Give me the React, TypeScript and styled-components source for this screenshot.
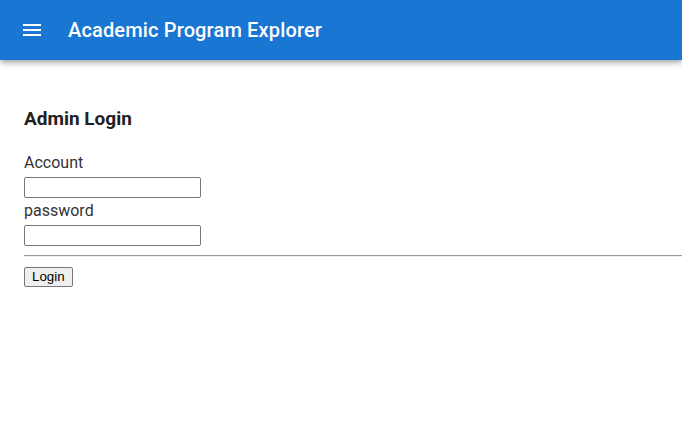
import React from "react";
import styled, { createGlobalStyle } from "styled-components";

const Global = createGlobalStyle`
  html, body { margin: 0; padding: 0; background: #fff; }
  body { font-family: Roboto, "Liberation Sans", sans-serif; color: rgba(0,0,0,0.87); }
`;

const AppBar = styled.header`
  height: 60px;
  background: #1976d2;
  color: #fff;
  display: flex;
  align-items: center;
  padding-left: 20px;
  gap: 24px;
  box-shadow: 0px 2px 4px -1px rgba(0,0,0,0.2), 0px 4px 5px 0px rgba(0,0,0,0.14), 0px 1px 10px 0px rgba(0,0,0,0.12);
  position: relative;
  z-index: 1;
`;

const MenuButton = styled.button`
  border: none;
  background: transparent;
  padding: 0;
  width: 24px;
  height: 24px;
  color: #fff;
  display: flex;
  cursor: pointer;
`;

const Title = styled.h1`
  margin: 0;
  font-family: Roboto, sans-serif;
  font-size: 20px;
  font-weight: 500;
  line-height: 1.6;
  letter-spacing: 0.0075em;
`;

const Main = styled.main`
  padding: 45px 0 0 24px;
`;

const Heading = styled.h2`
  margin: 0 0 18px;
  font-size: 19px;
  font-weight: 700;
  line-height: 27px;
  color: #212121;
`;

const Form = styled.form`
  display: flex;
  flex-direction: column;
  align-items: flex-start;
`;

const Label = styled.label`
  font-size: 16px;
  line-height: 24px;
  color: #333;
  padding-top: 1px;
  margin-bottom: 2px;
`;

const Input = styled.input`
  box-sizing: border-box;
  width: 177px;
  height: 21px;
  border: 1px solid #767676;
  border-radius: 2px;
  padding: 1px 2px;
  font-family: "Liberation Sans", sans-serif;
  font-size: 13.333px;
`;

const Divider = styled.hr`
  align-self: stretch;
  margin: 9px 0 10px;
  border: none;
  border-top: 1px solid #9a9a9a;
  border-bottom: 1px solid #eeeeee;
`;

const Button = styled.button`
  box-sizing: border-box;
  height: 20px;
  padding: 1px 7px;
  border: 1px solid #767676;
  border-radius: 2px;
  background: #efefef;
  color: #000;
  font-family: "Liberation Sans", Arial, sans-serif;
  font-size: 13.333px;
  line-height: 16px;
`;

export default function App() {
  return (
    <>
      <Global />
      <AppBar>
        <MenuButton aria-label="menu">
          <svg width="24" height="24" viewBox="0 0 24 24" fill="currentColor">
            <path d="M3 18h18v-2H3v2zm0-5h18v-2H3v2zm0-7v2h18V6H3z" />
          </svg>
        </MenuButton>
        <Title>Academic Program Explorer</Title>
      </AppBar>
      <Main>
        <Heading>Admin Login</Heading>
        <Form onSubmit={(e) => e.preventDefault()}>
          <Label htmlFor="account">Account</Label>
          <Input id="account" type="text" />
          <Label htmlFor="password">password</Label>
          <Input id="password" type="password" />
          <Divider />
          <Button type="submit">Login</Button>
        </Form>
      </Main>
    </>
  );
}
